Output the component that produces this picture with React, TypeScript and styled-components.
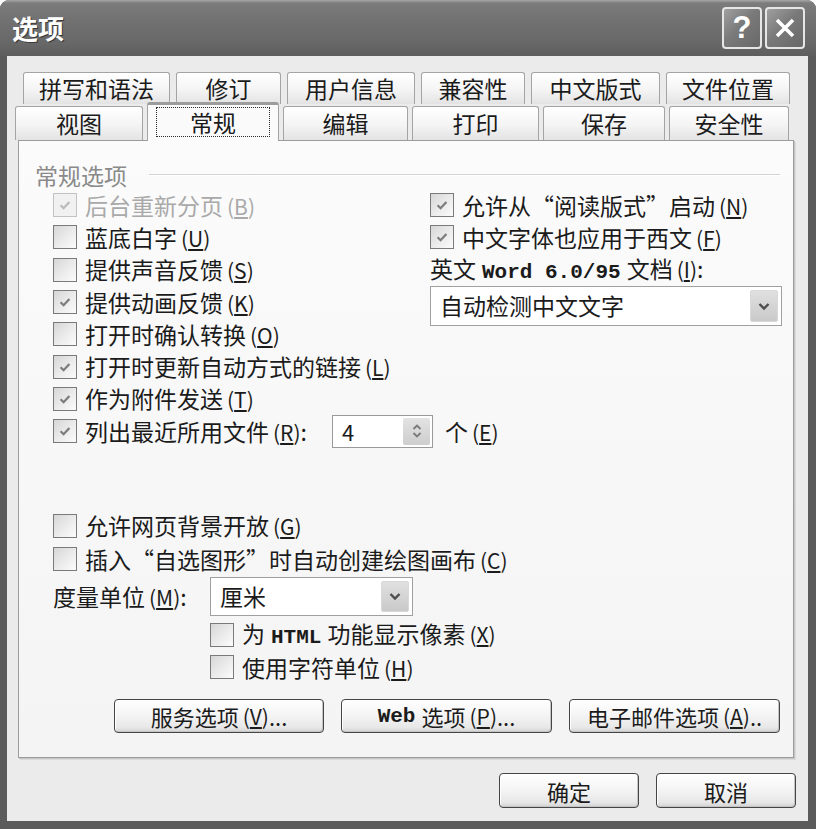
import styled, { createGlobalStyle } from "styled-components";

const MONO = `"Liberation Mono", "DejaVu Sans Mono", monospace`;

const GlobalStyle = createGlobalStyle`
  html, body { margin: 0; padding: 0; background: #ffffff; }
  body {
    font-family: "Noto Sans CJK SC", "Noto Sans", sans-serif;
    color: #1b1b1b;
  }
  *, *::before, *::after { box-sizing: border-box; }
`;

interface CheckOption {
  label: string;
  accel: string;
  checked?: boolean;
  disabled?: boolean;
}

const backTabs = [
  { label: "拼写和语法", w: 147 },
  { label: "修订", w: 105 },
  { label: "用户信息", w: 128 },
  { label: "兼容性", w: 104 },
  { label: "中文版式", w: 129 },
  { label: "文件位置", w: 124 },
];

const frontTabs = [
  { label: "视图", w: 128 },
  { label: "常规", w: 132, active: true },
  { label: "编辑", w: 125 },
  { label: "打印", w: 127 },
  { label: "保存", w: 122 },
  { label: "安全性", w: 120 },
];

const leftOptions: CheckOption[] = [
  { label: "后台重新分页", accel: "B", checked: true, disabled: true },
  { label: "蓝底白字", accel: "U" },
  { label: "提供声音反馈", accel: "S" },
  { label: "提供动画反馈", accel: "K", checked: true },
  { label: "打开时确认转换", accel: "O" },
  { label: "打开时更新自动方式的链接", accel: "L", checked: true },
  { label: "作为附件发送", accel: "T", checked: true },
];

const Window = styled.div`
  width: 816px;
  height: 829px;
  display: flex;
  flex-direction: column;
  background: #5b5b5b;
  border-radius: 9px 9px 0 0;
  overflow: hidden;
`;

const TitleBar = styled.div`
  flex: 0 0 56px;
  display: flex;
  align-items: center;
  padding: 0 11px 0 12px;
  background: linear-gradient(180deg, #a8a8a8 0px, #7c7c7c 3px, #727272 35%, #686868 75%, #5e5e5e 100%);
`;

const Title = styled.div`
  flex: 1;
  color: #ffffff;
  font-size: 26px;
  font-weight: 700;
  line-height: 1;
  text-shadow: 1px 1px 0 #3a3a3a;
`;

const CaptionButton = styled.div`
  width: 40px;
  height: 42px;
  margin-left: 3px;
  border: 2px solid #e6e6e6;
  border-radius: 4px;
  background: linear-gradient(135deg, #a0a0a0 0%, #7a7a7a 45%, #686868 100%);
  display: flex;
  align-items: center;
  justify-content: center;
  color: #ffffff;
  font: 700 31px "Liberation Sans", sans-serif;
`;

const Body = styled.div`
  flex: 1;
  margin: 0 8px 8px 7px;
  background: #ebebeb;
  display: flex;
  flex-direction: column;
`;

const TabRow = styled.div<{ $top: number; $left: number; $h: number; $gap: number }>`
  display: flex;
  align-items: flex-end;
  gap: ${(p) => p.$gap}px;
  height: ${(p) => p.$h}px;
  margin-top: ${(p) => p.$top}px;
  padding-left: ${(p) => p.$left}px;
`;

const Tab = styled.div<{ $w: number; $active?: boolean }>`
  width: ${(p) => p.$w}px;
  height: ${(p) => (p.$active ? "39px" : "100%")};
  margin-bottom: ${(p) => (p.$active ? "-1px" : "0")};
  position: ${(p) => (p.$active ? "relative" : "static")};
  z-index: ${(p) => (p.$active ? 2 : "auto")};
  display: flex;
  align-items: center;
  justify-content: center;
  padding: ${(p) => (p.$active ? "2px 8px 4px 8px" : "0")};
  border: 1px solid #a4a4a4;
  border-top: ${(p) => (p.$active ? "3px solid #9c9c9c" : "1px solid #a4a4a4")};
  border-bottom: none;
  border-radius: 3px 3px 0 0;
  background: ${(p) =>
    p.$active ? "#fafafa" : "linear-gradient(180deg, #ffffff 0%, #f4f4f4 55%, #e3e3e3 100%)"};
  font-size: 23px;
  line-height: 1;
`;

const FocusRing = styled.span`
  flex: 1;
  align-self: stretch;
  display: flex;
  align-items: center;
  justify-content: center;
  border: 1px dotted #2a2a2a;
`;

const Panel = styled.div`
  margin-left: 11px;
  width: 776px;
  height: 618px;
  border: 1px solid #9c9c9c;
  background: linear-gradient(180deg, #fbfbfb 0%, #f4f4f4 100%);
  box-shadow: 1px 1px 0 #c6c6c6, 2px 2px 0 #dadada;
  display: flex;
  flex-direction: column;
`;

const GroupHeader = styled.div`
  display: flex;
  align-items: center;
  gap: 22px;
  height: 28px;
  margin-top: 20px;
  padding: 0 13px 0 16px;
`;

const GroupLabel = styled.span`
  color: #8a8a8a;
  font-size: 23px;
  line-height: 1;
`;

const GroupLine = styled.span`
  flex: 1;
  height: 2px;
  border-top: 1px solid #d2d2d2;
  border-bottom: 1px solid #ffffff;
`;

const Columns = styled.div`
  display: flex;
  padding-left: 34px;
`;

const LeftCol = styled.div`
  flex: 0 0 377px;
  min-width: 0;
  display: flex;
  flex-direction: column;
`;

const RightCol = styled.div`
  flex: 1;
  min-width: 0;
  display: flex;
  flex-direction: column;
`;

const Row = styled.div<{ $h?: number; $indent?: number }>`
  height: ${(p) => p.$h ?? 32.3}px;
  padding-left: ${(p) => p.$indent ?? 0}px;
  display: flex;
  align-items: center;
  white-space: nowrap;
  font-size: 23px;
  line-height: 1;
`;

const Text = styled.span<{ $disabled?: boolean; $w?: number }>`
  color: ${(p) => (p.$disabled ? "#a9a9a9" : "#1b1b1b")};
  width: ${(p) => (p.$w ? `${p.$w}px` : "auto")};
  flex: none;
`;

const Mono = styled.span`
  font-family: ${MONO};
  font-size: 21px;
  font-weight: 700;
  margin: 0 6px;
`;

const Key = styled.span`
  margin-left: 4px;
  font-size: 21px;
  & u {
    text-decoration-thickness: 1.5px;
    text-underline-offset: 2px;
  }
`;

const Box = styled.span<{ $disabled?: boolean }>`
  width: 24px;
  height: 24px;
  flex: none;
  margin-right: 8px;
  display: flex;
  align-items: center;
  justify-content: center;
  border: 1px solid ${(p) => (p.$disabled ? "#c2c2c2" : "#7a7a7a")};
  background: ${(p) =>
    p.$disabled ? "#f1f1f1" : "linear-gradient(135deg, #d6d6d6 0%, #ececec 55%, #fbfbfb 100%)"};
`;

const SelectBox = styled.div<{ $w: number; $h: number }>`
  width: ${(p) => p.$w}px;
  height: ${(p) => p.$h}px;
  flex: none;
  border: 1px solid #a0a0a0;
  background: #ffffff;
  display: flex;
  align-items: center;
  padding: 3px 3px 3px 9px;
  font-size: 23px;
  line-height: 1;
`;

const SelectText = styled.span`
  flex: 1;
`;

const DropButton = styled.span`
  width: 28px;
  align-self: stretch;
  display: flex;
  align-items: center;
  justify-content: center;
  border: 1px solid #d9d9d9;
  border-radius: 2px;
  background: linear-gradient(180deg, #e0e0e0 0%, #c9c9c9 100%);
`;

const SpinBox = styled.div`
  width: 101px;
  height: 33px;
  flex: none;
  border: 1px solid #9a9a9a;
  background: #ffffff;
  display: flex;
  align-items: center;
  padding: 2px 2px 2px 9px;
  font-size: 22px;
  line-height: 1;
`;

const SpinButtons = styled.span`
  width: 27px;
  align-self: stretch;
  display: flex;
  flex-direction: column;
  align-items: center;
  justify-content: center;
  gap: 2px;
  border-radius: 2px;
  background: linear-gradient(180deg, #e3e3e3 0%, #cdcdcd 100%);
`;

const Lower = styled.div`
  display: flex;
  flex-direction: column;
  margin-top: 62px;
  padding-left: 34px;
`;

const ButtonRow = styled.div<{ $justify: string; $pad: string; $top: number; $gap: number }>`
  display: flex;
  justify-content: ${(p) => p.$justify};
  gap: ${(p) => p.$gap}px;
  padding: ${(p) => p.$pad};
  margin-top: ${(p) => p.$top}px;
`;

const PushButton = styled.div<{ $w: number; $h: number }>`
  width: ${(p) => p.$w}px;
  height: ${(p) => p.$h}px;
  border: 1px solid #454545;
  border-radius: 4px;
  background: linear-gradient(180deg, #ffffff 0%, #f5f5f5 45%, #e8e8e8 85%, #d3d3d3 100%);
  box-shadow: inset 1px 1px 0 #ffffff, inset -1px -1px 0 #c4c4c4;
  display: flex;
  align-items: center;
  justify-content: center;
  white-space: nowrap;
  font-size: 22px;
  line-height: 1;
  color: #1b1b1b;
`;

function Accel({ k }: { k: string }) {
  return (
    <Key>
      (<u>{k}</u>)
    </Key>
  );
}

function CheckBox({ checked, disabled }: { checked?: boolean; disabled?: boolean }) {
  return (
    <Box $disabled={disabled}>
      {checked && (
        <svg width="16" height="16" viewBox="0 0 16 16">
          <path
            d="M3.6 8.2 L6.6 11.2 L12.4 5"
            fill="none"
            stroke={disabled ? "#bababa" : "#7d7d7d"}
            strokeWidth="2.3"
          />
        </svg>
      )}
    </Box>
  );
}

function Chevron() {
  return (
    <svg width="16" height="16" viewBox="0 0 16 16">
      <path d="M3.5 6 L8 10.5 L12.5 6" fill="none" stroke="#4d4d4d" strokeWidth="2.4" />
    </svg>
  );
}

function CheckRow({ opt, indent }: { opt: CheckOption; indent?: number }) {
  return (
    <Row $indent={indent}>
      <CheckBox checked={opt.checked} disabled={opt.disabled} />
      <Text $disabled={opt.disabled}>
        {opt.label}
        <Accel k={opt.accel} />
      </Text>
    </Row>
  );
}

export default function App() {
  return (
    <>
      <GlobalStyle />
      <Window>
        <TitleBar>
          <Title>选项</Title>
          <CaptionButton>?</CaptionButton>
          <CaptionButton>
            <svg width="24" height="24" viewBox="0 0 24 24">
              <path d="M4 4 L20 20 M20 4 L4 20" stroke="#ffffff" strokeWidth="3.6" />
            </svg>
          </CaptionButton>
        </TitleBar>

        <Body>
          <TabRow $top={16} $left={16} $h={32} $gap={6}>
            {backTabs.map((t) => (
              <Tab key={t.label} $w={t.w}>
                {t.label}
              </Tab>
            ))}
          </TabRow>
          <TabRow $top={2} $left={8} $h={34} $gap={4}>
            {frontTabs.map((t) => (
              <Tab key={t.label} $w={t.w} $active={t.active}>
                {t.active ? <FocusRing>{t.label}</FocusRing> : t.label}
              </Tab>
            ))}
          </TabRow>

          <Panel>
            <GroupHeader>
              <GroupLabel>常规选项</GroupLabel>
              <GroupLine />
            </GroupHeader>

            <Columns>
              <LeftCol>
                {leftOptions.map((o) => (
                  <CheckRow key={o.accel} opt={o} />
                ))}
                <Row>
                  <CheckBox checked />
                  <Text $w={247}>
                    列出最近所用文件
                    <Accel k="R" />:
                  </Text>
                  <SpinBox>
                    <SelectText>4</SelectText>
                    <SpinButtons>
                      <svg width="10" height="6" viewBox="0 0 10 6">
                        <path d="M1.5 5 L5 1.5 L8.5 5" fill="none" stroke="#7a7a7a" strokeWidth="1.8" />
                      </svg>
                      <svg width="10" height="6" viewBox="0 0 10 6">
                        <path d="M1.5 1 L5 4.5 L8.5 1" fill="none" stroke="#7a7a7a" strokeWidth="1.8" />
                      </svg>
                    </SpinButtons>
                  </SpinBox>
                  <Text style={{ marginLeft: 12 }}>
                    个<Accel k="E" />
                  </Text>
                </Row>
              </LeftCol>

              <RightCol>
                <CheckRow opt={{ label: "允许从“阅读版式”启动", accel: "N", checked: true }} />
                <CheckRow opt={{ label: "中文字体也应用于西文", accel: "F", checked: true }} />
                <Row>
                  <Text>
                    英文<Mono>Word 6.0/95</Mono>文档
                    <Accel k="I" />:
                  </Text>
                </Row>
                <SelectBox $w={352} $h={40}>
                  <SelectText>自动检测中文文字</SelectText>
                  <DropButton>
                    <Chevron />
                  </DropButton>
                </SelectBox>
              </RightCol>
            </Columns>

            <Lower>
              <CheckRow opt={{ label: "允许网页背景开放", accel: "G" }} />
              <Row $h={35}>
                <CheckBox />
                <Text>
                  插入“自选图形”时自动创建绘图画布
                  <Accel k="C" />
                </Text>
              </Row>
              <Row $h={39}>
                <Text $w={157}>
                  度量单位
                  <Accel k="M" />:
                </Text>
                <SelectBox $w={203} $h={39}>
                  <SelectText>厘米</SelectText>
                  <DropButton>
                    <Chevron />
                  </DropButton>
                </SelectBox>
              </Row>
              <Row $indent={157} style={{ marginTop: 3 }}>
                <CheckBox />
                <Text>
                  为<Mono>HTML</Mono>功能显示像素
                  <Accel k="X" />
                </Text>
              </Row>
              <CheckRow indent={157} opt={{ label: "使用字符单位", accel: "H" }} />
            </Lower>

            <ButtonRow $justify="flex-start" $pad="0 0 0 95px" $top={16} $gap={17}>
              <PushButton $w={210} $h={34}>
                服务选项<Accel k="V" />...
              </PushButton>
              <PushButton $w={211} $h={34}>
                <Mono style={{ marginLeft: 0 }}>Web</Mono>选项<Accel k="P" />...
              </PushButton>
              <PushButton $w={211} $h={34}>
                电子邮件选项<Accel k="A" />..
              </PushButton>
            </ButtonRow>
          </Panel>

          <ButtonRow $justify="flex-end" $pad="0 12px 0 0" $top={15} $gap={17}>
            <PushButton $w={140} $h={35}>确定</PushButton>
            <PushButton $w={140} $h={35}>取消</PushButton>
          </ButtonRow>
        </Body>
      </Window>
    </>
  );
}
